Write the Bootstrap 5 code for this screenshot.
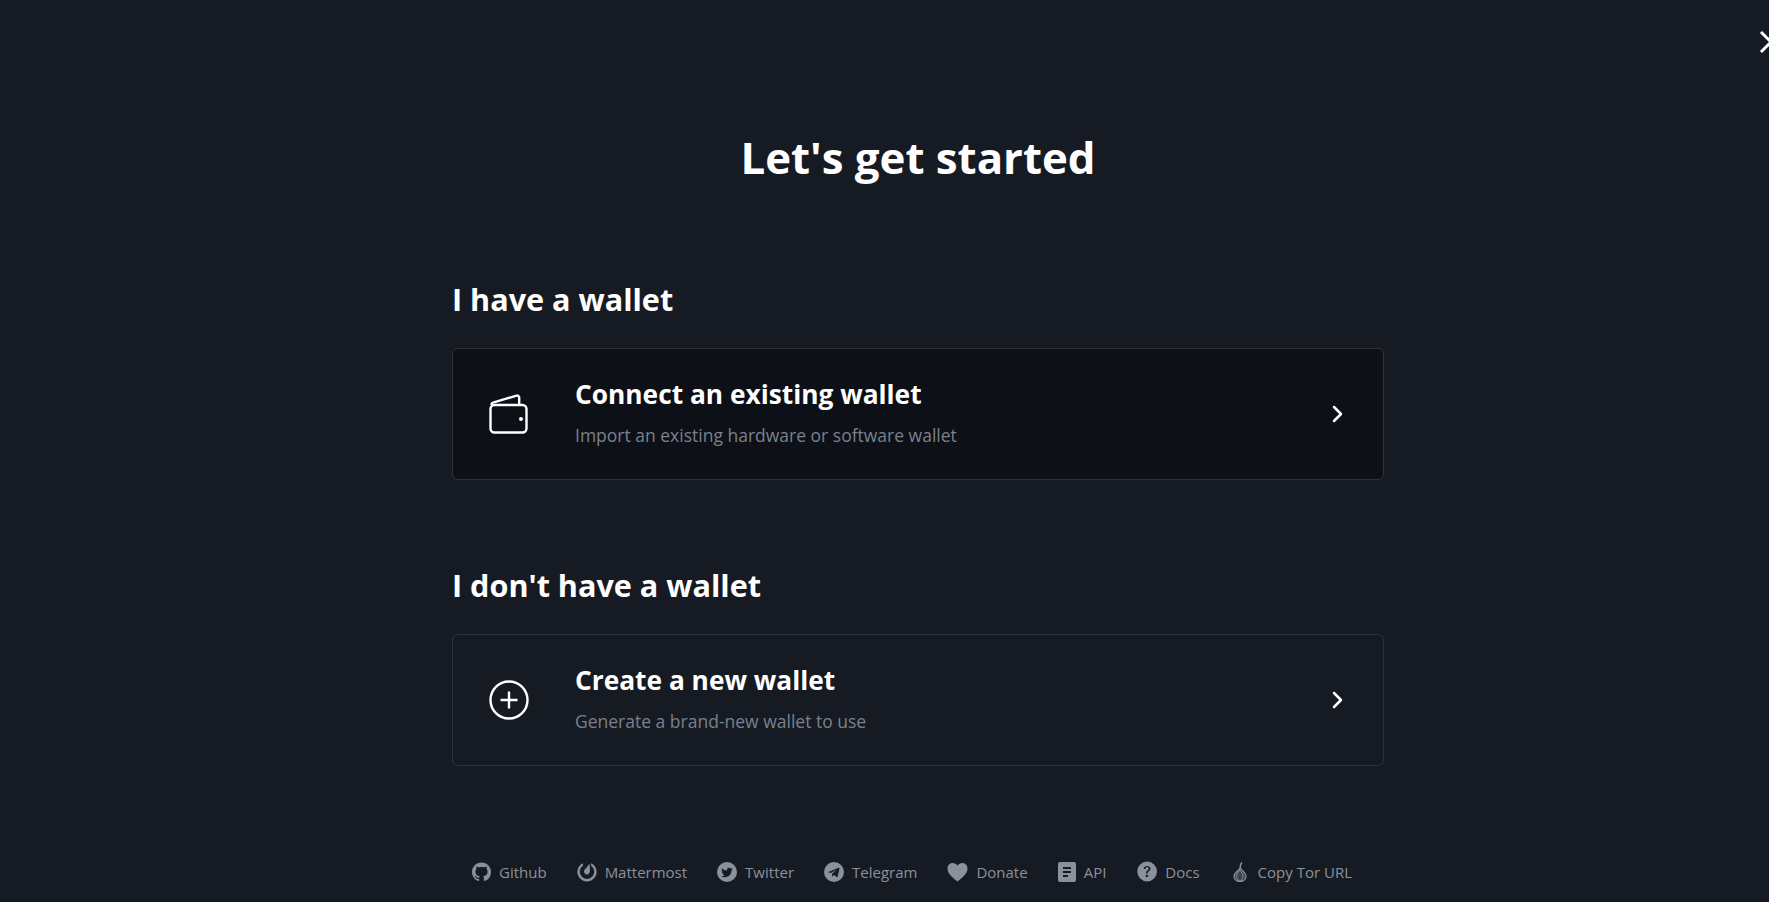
<!DOCTYPE html>
<html lang="en">
<head>
    <meta charset="UTF-8">
    <meta name="viewport" content="width=device-width, initial-scale=1.0">
    <title>Let's get started</title>
    <link rel="stylesheet" href="https://cdn.jsdelivr.net/npm/bootstrap@5.3.3/dist/css/bootstrap.min.css">
    <style>
        html, body { overflow: hidden; height: 902px; }
        body { background: #161b23; color: #fff; font-family: "Open Sans", sans-serif; }
        .page-wrap { width: 1836px; position: relative; padding-top: 133px; }
        .close-x { position: absolute; top: 30px; right: 53px; }
        .main-col { width: 932px; margin: 0 auto; }
        .main-title { font-size: 43.8px; font-weight: 700; line-height: 48px; margin-bottom: 100px; }
        .section-title { font-size: 30.6px; font-weight: 700; line-height: 37px; margin-bottom: 30px; }
        .wallet-card { background: transparent; border: 1px solid #2d323b; border-radius: 6px; color: #fff; height: 132px; text-decoration: none; margin-bottom: 87px; }
        .wallet-card.is-dark { background: #0d1017; }
        .wallet-card .card-body { padding: 0 39px 0 36px; }
        .card-ico { width: 40px; margin-right: 46px; }
        .card-name { font-size: 26.3px; font-weight: 700; line-height: 30px; margin-bottom: 12px; }
        .card-desc { font-size: 17.5px; line-height: 28px; color: #7a818c; }
        .foot-links { padding-left: 20px; gap: 30px; margin-top: 95px; }
        .foot-links a { color: #8b919c; font-size: 15px; line-height: 20px; text-decoration: none; gap: 8px; }
    </style>
</head>
<body>
<div class="page-wrap">
    <svg class="close-x" width="24" height="24" viewBox="0 0 24 24" fill="none" stroke="#fff" stroke-width="3"><path d="M2 2l20 20M22 2L2 22"/></svg>
    <h1 class="main-title text-center">Let's get started</h1>
    <div class="main-col">
        <h2 class="section-title">I have a wallet</h2>
        <a href="#" class="card wallet-card is-dark">
            <div class="card-body d-flex align-items-center">
                <svg class="card-ico flex-shrink-0" width="40" height="40" viewBox="0 0 40 40" fill="none" stroke="#fff" stroke-width="2.4">
                    <rect x="1.500" y="11" width="36" height="27.500" rx="4"/>
                    <path d="M2.500 11v-.5a2 2 0 0 1 1.500-1.900L27.500 1.700a2 2 0 0 1 2.700 1.900V11"/>
                    <circle cx="32" cy="25" r="2" fill="#fff" stroke="none"/>
                </svg>
                <div class="flex-grow-1">
                    <div class="card-name">Connect an existing wallet</div>
                    <div class="card-desc">Import an existing hardware or software wallet</div>
                </div>
                <svg width="12" height="18" viewBox="0 0 12 18" fill="none" stroke="#fff" stroke-width="2.5" stroke-linecap="round" stroke-linejoin="round"><path d="M2 2l7 7-7 7"/></svg>
            </div>
        </a>
        <h2 class="section-title">I don't have a wallet</h2>
        <a href="#" class="card wallet-card">
            <div class="card-body d-flex align-items-center">
                <svg class="card-ico flex-shrink-0" width="40" height="40" viewBox="0 0 40 40" fill="none" stroke="#fff" stroke-width="2.400">
                    <circle cx="20" cy="20" r="18.500"/>
                    <path d="M20 11.500v17M11.500 20h17"/>
                </svg>
                <div class="flex-grow-1">
                    <div class="card-name">Create a new wallet</div>
                    <div class="card-desc">Generate a brand-new wallet to use</div>
                </div>
                <svg width="12" height="18" viewBox="0 0 12 18" fill="none" stroke="#fff" stroke-width="2.5" stroke-linecap="round" stroke-linejoin="round"><path d="M2 2l7 7-7 7"/></svg>
            </div>
        </a>
        <div class="foot-links d-flex align-items-center">
            <a href="#" class="d-flex align-items-center">
                <svg width="19" height="20" viewBox="0 0 16 16" fill="#8b919c"><path d="M8 0C3.58 0 0 3.58 0 8c0 3.54 2.29 6.53 5.47 7.59.4.07.55-.17.55-.38 0-.19-.01-.82-.01-1.49-2.01.37-2.53-.49-2.69-.94-.09-.23-.48-.94-.82-1.13-.28-.15-.68-.52-.01-.53.63-.01 1.08.58 1.23.82.72 1.21 1.87.87 2.33.66.07-.52.28-.87.51-1.07-1.78-.2-3.64-.89-3.64-3.95 0-.87.31-1.59.82-2.15-.08-.2-.36-1.02.08-2.12 0 0 .67-.21 2.2.82.64-.18 1.32-.27 2-.27.68 0 1.36.09 2 .27 1.53-1.04 2.2-.82 2.2-.82.44 1.1.16 1.92.08 2.12.51.56.82 1.27.82 2.15 0 3.07-1.87 3.75-3.65 3.95.29.25.54.73.54 1.48 0 1.07-.01 1.93-.01 2.2 0 .21.15.46.55.38A8.013 8.013 0 0016 8c0-4.42-3.58-8-8-8z"/></svg>
                Github
            </a>
            <a href="#" class="d-flex align-items-center">
                <svg width="20" height="20" viewBox="0 0 20 20" fill="#8b919c"><path d="M6 1.200a9.600 9.600 0 1 0 8 0l.1 2.600a7.200 7.200 0 1 1-8.200 0z"/><path d="M12.400 1.800c.5 2.600.6 5.400.5 7.400-.1 2-1.400 3.300-3 3.200-1.700-.1-2.900-1.500-2.800-3.200.1-1.300.9-2.200 2-3z"/></svg>
                Mattermost
            </a>
            <a href="#" class="d-flex align-items-center">
                <svg width="20" height="20" viewBox="0 0 20 20"><circle cx="10" cy="10" r="10" fill="#8b919c"/><path transform="translate(4.200 4.400) scale(.72)" fill="#161b23" d="M5.026 15c6.038 0 9.341-5.003 9.341-9.334 0-.14 0-.282-.006-.422A6.685 6.685 0 0 0 16 3.542a6.658 6.658 0 0 1-1.889.518 3.301 3.301 0 0 0 1.447-1.817 6.533 6.533 0 0 1-2.087.793A3.286 3.286 0 0 0 7.875 6.03a9.325 9.325 0 0 1-6.767-3.429 3.289 3.289 0 0 0 1.018 4.382A3.323 3.323 0 0 1 .64 6.575v.045a3.288 3.288 0 0 0 2.632 3.218 3.203 3.203 0 0 1-.865.115 3.23 3.23 0 0 1-.614-.057 3.283 3.283 0 0 0 3.067 2.277A6.588 6.588 0 0 1 .78 13.58a6.32 6.32 0 0 1-.78-.045A9.344 9.344 0 0 0 5.026 15z"/></svg>
                Twitter
            </a>
            <a href="#" class="d-flex align-items-center">
                <svg width="20" height="20" viewBox="0 0 20 20"><circle cx="10" cy="10" r="10" fill="#8b919c"/><path fill="#161b23" d="M3.800 10.300 14.700 5.700c.5-.2.900.1.800.7l-1.800 8.200c-.1.500-.5.700-1 .4l-2.800-2-1.500 1.400c-.2.200-.4.100-.4-.2l.1-2.400 4.800-4.400-6 3.700-2.600-.8c-.6-.2-.7-.5-.5-.4z"/></svg>
                Telegram
            </a>
            <a href="#" class="d-flex align-items-center">
                <svg width="21" height="20" viewBox="0 0 20 20" fill="#8b919c"><path d="M10 19.500C7 17 0 12.500 0 6.500 0 3.200 2.400 1 5.200 1 7.200 1 9 2 10 3.800 11 2 12.800 1 14.800 1 17.600 1 20 3.200 20 6.500c0 6-7 10.500-10 13z"/></svg>
                Donate
            </a>
            <a href="#" class="d-flex align-items-center">
                <svg width="18" height="20" viewBox="0 0 18 20"><rect width="18" height="20" rx="2" fill="#8b919c"/><path stroke="#161b23" stroke-width="2" d="M5 6h8M5 10h8M5 14h5"/></svg>
                API
            </a>
            <a href="#" class="d-flex align-items-center">
                <svg width="21" height="21" viewBox="-1 -.5 17 17" fill="#8b919c"><path d="M16 8A8 8 0 1 1 0 8a8 8 0 0 1 16 0zM5.496 6.033h.825c.138 0 .248-.113.266-.25.09-.656.54-1.134 1.342-1.134.686 0 1.314.343 1.314 1.168 0 .635-.374.927-.965 1.371-.673.489-1.206 1.06-1.168 1.987l.003.217a.25.25 0 0 0 .25.246h.811a.25.25 0 0 0 .25-.25v-.105c0-.718.273-.927 1.01-1.486.609-.463 1.244-.977 1.244-2.056 0-1.511-1.276-2.241-2.673-2.241-1.267 0-2.655.59-2.75 2.286a.237.237 0 0 0 .241.247zm2.325 6.443c.61 0 1.029-.394 1.029-.927 0-.552-.42-.94-1.029-.94-.584 0-1.009.388-1.009.94 0 .533.425.927 1.01.927z"/></svg>
                Docs
            </a>
            <a href="#" class="d-flex align-items-center">
                <svg width="20" height="20" viewBox="0 0 18 20" fill="none" stroke="#8b919c"><path stroke-width="1.500" d="M11 .5C9.500 2 9 4 9.500 6"/><path fill="#8b919c" fill-opacity=".35" stroke-width="1.200" d="M9 6c2 2.500 6 4.500 6 8.500 0 3-2.700 5-6 5s-6-2-6-5C3 10.500 7.500 9 9 6z"/><path stroke-width="1" d="M9 8c-1.500 2-3.500 3.500-3.500 6.500S7.500 18.500 9 19M9 8c1 2 3 3.500 3 6.500S10.500 18.500 9 19"/></svg>
                Copy Tor URL
            </a>
        </div>
    </div>
</div>
</body>
</html>
